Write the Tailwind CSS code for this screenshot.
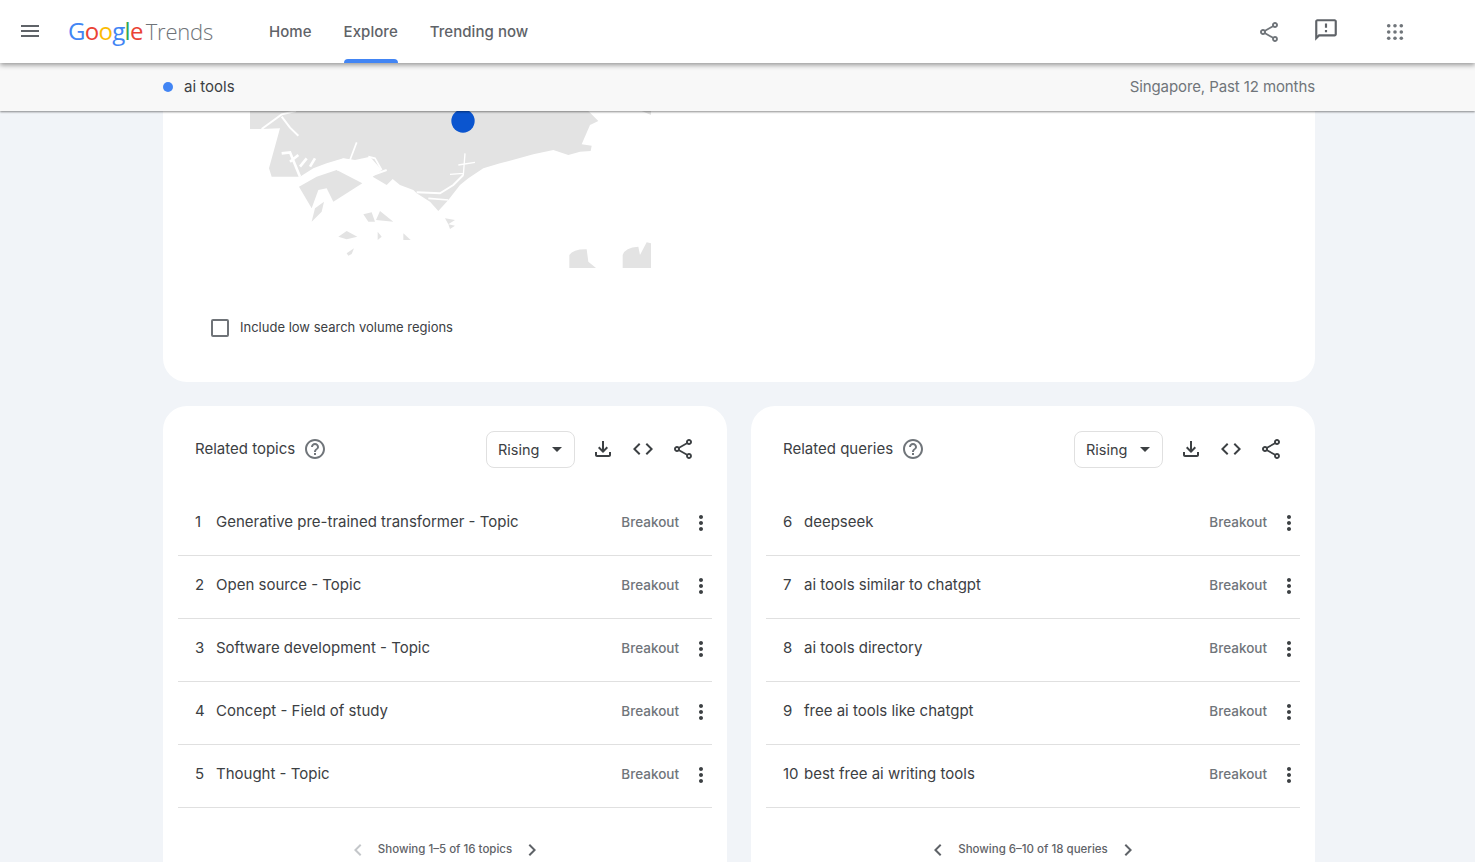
<!DOCTYPE html>
<html lang="en">
<head>
  <meta charset="UTF-8">
  <meta name="viewport" content="width=device-width, initial-scale=1.0">
  <title>Google Trends</title>
  <script src="https://cdn.jsdelivr.net/npm/@tailwindcss/browser@4"></script>
</head>
<body class="bg-[#f1f4f8] [font-family:Inter,sans-serif] h-[862px] overflow-hidden text-[#3c4043]">
  <!-- icon sprites -->
  <svg class="hidden">
    <symbol id="share" viewBox="0 0 24 24"><path d="M18 16.08c-.76 0-1.44.3-1.96.77L8.91 12.7c.05-.23.09-.46.09-.7s-.04-.47-.09-.7l7.05-4.11c.54.5 1.25.81 2.04.81 1.66 0 3-1.34 3-3s-1.34-3-3-3-3 1.34-3 3c0 .24.04.47.09.7L8.04 9.81C7.5 9.31 6.79 9 6 9c-1.66 0-3 1.34-3 3s1.34 3 3 3c.79 0 1.5-.31 2.04-.81l7.12 4.16c-.05.21-.08.43-.08.65 0 1.61 1.31 2.92 2.92 2.92 1.61 0 2.92-1.31 2.92-2.92s-1.31-2.92-2.92-2.92zM18 4c.55 0 1 .45 1 1s-.45 1-1 1-1-.45-1-1 .45-1 1-1zM6 13c-.55 0-1-.45-1-1s.45-1 1-1 1 .45 1 1-.45 1-1 1zm12 7.02c-.55 0-1-.45-1-1s.45-1 1-1 1 .45 1 1-.45 1-1 1z"/></symbol>
    <symbol id="download" viewBox="0 0 24 24"><path d="M18 15v3H6v-3H4v3c0 1.1.9 2 2 2h12c1.1 0 2-.9 2-2v-3h-2zm-1-4l-1.41-1.41L13 12.17V4h-2v8.17L8.41 9.59 7 11l5 5 5-5z"/></symbol>
    <symbol id="code" viewBox="0 0 24 24"><path d="M9.4 16.6L4.8 12l4.6-4.6L8 6l-6 6 6 6 1.4-1.4zm5.2 0l4.6-4.6-4.6-4.6L16 6l6 6-6 6-1.4-1.4z"/></symbol>
    <symbol id="help" viewBox="0 0 24 24"><path d="M11 18h2v-2h-2v2zm1-16C6.48 2 2 6.48 2 12s4.48 10 10 10 10-4.48 10-10S17.52 2 12 2zm0 18c-4.41 0-8-3.59-8-8s3.59-8 8-8 8 3.59 8 8-3.59 8-8 8zm0-14c-2.21 0-4 1.79-4 4h2c0-1.1.9-2 2-2s2 .9 2 2c0 2-3 1.75-3 5h2c0-2.25 3-2.5 3-5 0-2.21-1.79-4-4-4z"/></symbol>
    <symbol id="more" viewBox="0 0 24 24"><path d="M12 8c1.1 0 2-.9 2-2s-.9-2-2-2-2 .9-2 2 .9 2 2 2zm0 2c-1.1 0-2 .9-2 2s.9 2 2 2 2-.9 2-2-.9-2-2-2zm0 6c-1.1 0-2 .9-2 2s.9 2 2 2 2-.9 2-2-.9-2-2-2z"/></symbol>
    <symbol id="prev" viewBox="0 0 24 24"><path d="M15.41 7.41L14 6l-6 6 6 6 1.41-1.41L10.83 12z"/></symbol>
    <symbol id="next" viewBox="0 0 24 24"><path d="M10 6L8.59 7.41 13.17 12l-4.58 4.59L10 18l6-6z"/></symbol>
  </svg>

  <header class="relative z-20 h-[63px] bg-white flex items-center shadow-[0_2px_5px_rgba(0,0,0,0.4)]">
    <svg class="w-6 h-6 ml-[18px] fill-[#5f6368] -mt-[1px]" viewBox="0 0 24 24"><path d="M3 18h18v-2H3v2zm0-5h18v-2H3v2zm0-7v2h18V6H3z"/></svg>
    <div class="ml-[26px] w-[174px] flex items-baseline -mt-[1px] leading-none [font-family:'Open_Sans',sans-serif] whitespace-nowrap">
      <span class="text-[24px] tracking-[-0.7px] font-medium"><span class="text-[#4285f4]">G</span><span class="text-[#ea4335]">o</span><span class="text-[#fbbc05]">o</span><span class="text-[#4285f4]">g</span><span class="text-[#34a853]">l</span><span class="text-[#ea4335]">e</span></span>
      <span class="ml-[3px] text-[22px] tracking-[-0.2px] text-[#6f7378] font-light">Trends</span>
    </div>
    <nav class="flex h-full gap-8 ml-[27px] text-[15px] tracking-[0.05px] font-medium text-[#5f6368]">
      <a class="h-full pt-[2px] flex items-center">Home</a>
      <a class="relative h-full pt-[2px] flex items-center">Explore<span class="absolute bottom-0 left-0 right-0 h-1 rounded-t bg-[#4285f4]"></span></a>
      <a class="h-full pt-[2px] flex items-center">Trending now</a>
    </nav>
    <div class="ml-auto flex items-center mr-[68px]">
      <svg class="w-6 h-6 fill-[#70757a]"><use href="#share"/></svg>
      <svg class="w-[26px] h-[26px] ml-[32px] -mt-[4px] fill-[#5f6368]" viewBox="0 0 24 24"><path d="M20 2H4c-1.1 0-1.99.9-1.99 2L2 22l4-4h14c1.1 0 2-.9 2-2V4c0-1.1-.9-2-2-2zm0 14H5.17l-.59.59-.58.58V4h16v12zm-9-4h2v2h-2zm0-6h2v4h-2z"/></svg>
      <svg class="w-6 h-6 ml-[44px] fill-[#70757a]" viewBox="0 0 24 24"><circle cx="5.7" cy="5.7" r="1.8"/><circle cx="12" cy="5.7" r="1.8"/><circle cx="18.3" cy="5.7" r="1.8"/><circle cx="5.7" cy="12" r="1.8"/><circle cx="12" cy="12" r="1.8"/><circle cx="18.3" cy="12" r="1.8"/><circle cx="5.7" cy="18.3" r="1.8"/><circle cx="12" cy="18.3" r="1.8"/><circle cx="18.3" cy="18.3" r="1.8"/></svg>
    </div>
  </header>

  <div class="relative z-10 h-[48px] bg-[#f8f8f8] flex items-center justify-between pr-[160px] pl-[163px] shadow-[0_1px_2px_rgba(0,0,0,0.45)]">
    <div class="flex items-center">
      <span class="w-[10px] h-[10px] rounded-full bg-[#4285f4]"></span>
      <span class="ml-[11px] text-[15px]">ai tools</span>
    </div>
    <span class="text-[15px] tracking-[-0.1px] text-[#70757a]">Singapore, Past 12 months</span>
  </div>

  <main class="w-[1152px] ml-[163px]">
    <section class="bg-white rounded-b-[24px] h-[271px] pl-[37px]">
      <svg class="block w-[470px] h-[163px] fill-[#e3e3e3]" viewBox="0 18 1410 489">
        <path d="M150 18H1165L1195 48 1170 60 1145 118 1175 122 1172 138 1140 140 1105 150 1060 135 1000 148 900 175 850 190 805 220 780 240 745 285 715 318 690 290 650 265 640 255 600 240 578 222 560 240 518 215 545 195 510 155 465 165 430 160 380 175 340 190 300 215 215 215 207 190 240 70 185 72H150z"/>
        <path d="M297 245 350 215 410 195 487 235 400 290 380 250 355 255 335 310 297 245z"/>
        <path d="M335 350 345 310 372 290 365 320z"/>
        <path d="M415 395 440 378 472 395 440 403z"/>
        <path d="M490 328 515 322 525 350 505 350z M528 345 540 318 580 350z"/>
        <path d="M533 405V380L545 395z M610 385 632 405H610z"/>
        <path d="M440 445 462 430 455 447 445 452z"/>
        <path d="M735 340 765 345 745 358z M745 358 765 362 750 372z"/>
        <path d="M1108 489V450Q1120 432 1160 433L1165 470 1188 489z"/>
        <path d="M1268 489V450Q1275 427 1315 425L1320 450 1340 412 1353 415V489z"/>
        <path d="M1325 18H1353V30z"/>
        <g fill="none" stroke="#fff">
          <path stroke-width="6" d="M185 72 245 28 288 18"/>
          <path stroke-width="6" d="M245 35 270 68 295 92"/>
          <path stroke-width="8" d="M245 145 270 142 300 215 M270 170 295 150 M300 185 320 160 M330 185 345 160"/>
          <path stroke-width="10" d="M300 222 415 170"/>
          <path stroke-width="8" d="M410 195 430 165 480 172"/>
          <path stroke-width="5" d="M450 165 470 112"/>
          <path stroke-width="5" d="M505 155 525 160 545 195"/>
          <path stroke-width="6" d="M518 210 560 195"/>
          <path stroke-width="6" d="M650 262 720 265 760 240 790 210"/>
          <path stroke-width="4" d="M790 210 795 145 M775 180 825 172 M750 208 790 205"/>
          <path stroke-width="5" d="M685 280 745 285"/>
        </g>
        <circle cx="789" cy="48" r="35" fill="#0b55cf"/>
      </svg>
      <div class="flex items-center ml-[12px] mt-[44px]">
        <span class="w-[18px] h-[18px] -ml-[1px] border-2 border-[#6f7378] rounded-[2px]"></span>
        <span class="ml-[11px] text-[13px]">Include low search volume regions</span>
      </div>
    </section>

    <div class="grid grid-cols-2 gap-6 mt-[24px]">
      <!-- related topics -->
      <section class="bg-white rounded-[24px] h-[480px] px-[15px]">
        <div class="h-[87px] flex items-center pl-[17px] pr-[17px]">
          <span class="text-[15px]">Related topics</span>
          <svg class="w-6 h-6 ml-[8px] -mt-[1px] fill-[#70757a]"><use href="#help"/></svg>
          <div class="ml-auto w-[89px] h-[37px] border border-[#e0e0e0] rounded-lg flex items-center pl-[11px] text-[14.5px]">Rising<span class="ml-[13px] border-x-[5px] border-x-transparent border-t-[5px] border-t-[#3c4043]"></span></div>
          <svg class="w-6 h-6 ml-[16px] -mt-[1px] fill-[#3c4043]"><use href="#download"/></svg>
          <svg class="w-6 h-6 ml-[16px] -mt-[1px] fill-[#3c4043]"><use href="#code"/></svg>
          <svg class="w-6 h-6 ml-[16px] -mt-[1px] fill-[#3c4043]"><use href="#share"/></svg>
        </div>
        <div class="h-[63px] border-b border-[#e0e0e0] flex items-center pb-[3px] pl-[17px] text-[15px]"><span class="w-[21px]">1</span><span>Generative pre-trained transformer - Topic</span><span class="ml-auto text-[13.5px] text-[#70757a] font-medium">Breakout</span><svg class="w-6 h-6 ml-[10px] -mr-[1px] fill-[#3c4043]"><use href="#more"/></svg></div>
        <div class="h-[63px] border-b border-[#e0e0e0] flex items-center pb-[3px] pl-[17px] text-[15px]"><span class="w-[21px]">2</span><span>Open source - Topic</span><span class="ml-auto text-[13.5px] text-[#70757a] font-medium">Breakout</span><svg class="w-6 h-6 ml-[10px] -mr-[1px] fill-[#3c4043]"><use href="#more"/></svg></div>
        <div class="h-[63px] border-b border-[#e0e0e0] flex items-center pb-[3px] pl-[17px] text-[15px]"><span class="w-[21px]">3</span><span>Software development - Topic</span><span class="ml-auto text-[13.5px] text-[#70757a] font-medium">Breakout</span><svg class="w-6 h-6 ml-[10px] -mr-[1px] fill-[#3c4043]"><use href="#more"/></svg></div>
        <div class="h-[63px] border-b border-[#e0e0e0] flex items-center pb-[3px] pl-[17px] text-[15px]"><span class="w-[21px]">4</span><span>Concept - Field of study</span><span class="ml-auto text-[13.5px] text-[#70757a] font-medium">Breakout</span><svg class="w-6 h-6 ml-[10px] -mr-[1px] fill-[#3c4043]"><use href="#more"/></svg></div>
        <div class="h-[63px] border-b border-[#e0e0e0] flex items-center pb-[3px] pl-[17px] text-[15px]"><span class="w-[21px]">5</span><span>Thought - Topic</span><span class="ml-auto text-[13.5px] text-[#70757a] font-medium">Breakout</span><svg class="w-6 h-6 ml-[10px] -mr-[1px] fill-[#3c4043]"><use href="#more"/></svg></div>
        <div class="flex items-center justify-center h-[24px] mt-[30px] text-[11.5px] font-medium text-[#5f6368]">
          <svg class="w-6 h-6 fill-[#c4c7ca]"><use href="#prev"/></svg>
          <span class="mx-[8px]">Showing 1–5 of 16 topics</span>
          <svg class="w-6 h-6 fill-[#5f6368]"><use href="#next"/></svg>
        </div>
      </section>

      <!-- related queries -->
      <section class="bg-white rounded-[24px] h-[480px] px-[15px]">
        <div class="h-[87px] flex items-center pl-[17px] pr-[17px]">
          <span class="text-[15px]">Related queries</span>
          <svg class="w-6 h-6 ml-[8px] -mt-[1px] fill-[#70757a]"><use href="#help"/></svg>
          <div class="ml-auto w-[89px] h-[37px] border border-[#e0e0e0] rounded-lg flex items-center pl-[11px] text-[14.5px]">Rising<span class="ml-[13px] border-x-[5px] border-x-transparent border-t-[5px] border-t-[#3c4043]"></span></div>
          <svg class="w-6 h-6 ml-[16px] -mt-[1px] fill-[#3c4043]"><use href="#download"/></svg>
          <svg class="w-6 h-6 ml-[16px] -mt-[1px] fill-[#3c4043]"><use href="#code"/></svg>
          <svg class="w-6 h-6 ml-[16px] -mt-[1px] fill-[#3c4043]"><use href="#share"/></svg>
        </div>
        <div class="h-[63px] border-b border-[#e0e0e0] flex items-center pb-[3px] pl-[17px] text-[15px]"><span class="w-[21px]">6</span><span>deepseek</span><span class="ml-auto text-[13.5px] text-[#70757a] font-medium">Breakout</span><svg class="w-6 h-6 ml-[10px] -mr-[1px] fill-[#3c4043]"><use href="#more"/></svg></div>
        <div class="h-[63px] border-b border-[#e0e0e0] flex items-center pb-[3px] pl-[17px] text-[15px]"><span class="w-[21px]">7</span><span>ai tools similar to chatgpt</span><span class="ml-auto text-[13.5px] text-[#70757a] font-medium">Breakout</span><svg class="w-6 h-6 ml-[10px] -mr-[1px] fill-[#3c4043]"><use href="#more"/></svg></div>
        <div class="h-[63px] border-b border-[#e0e0e0] flex items-center pb-[3px] pl-[17px] text-[15px]"><span class="w-[21px]">8</span><span>ai tools directory</span><span class="ml-auto text-[13.5px] text-[#70757a] font-medium">Breakout</span><svg class="w-6 h-6 ml-[10px] -mr-[1px] fill-[#3c4043]"><use href="#more"/></svg></div>
        <div class="h-[63px] border-b border-[#e0e0e0] flex items-center pb-[3px] pl-[17px] text-[15px]"><span class="w-[21px]">9</span><span>free ai tools like chatgpt</span><span class="ml-auto text-[13.5px] text-[#70757a] font-medium">Breakout</span><svg class="w-6 h-6 ml-[10px] -mr-[1px] fill-[#3c4043]"><use href="#more"/></svg></div>
        <div class="h-[63px] border-b border-[#e0e0e0] flex items-center pb-[3px] pl-[17px] text-[15px]"><span class="w-[21px]">10</span><span>best free ai writing tools</span><span class="ml-auto text-[13.5px] text-[#70757a] font-medium">Breakout</span><svg class="w-6 h-6 ml-[10px] -mr-[1px] fill-[#3c4043]"><use href="#more"/></svg></div>
        <div class="flex items-center justify-center h-[24px] mt-[30px] text-[11.5px] font-medium text-[#5f6368]">
          <svg class="w-6 h-6 fill-[#5f6368]"><use href="#prev"/></svg>
          <span class="mx-[8px]">Showing 6–10 of 18 queries</span>
          <svg class="w-6 h-6 fill-[#5f6368]"><use href="#next"/></svg>
        </div>
      </section>
    </div>
  </main>
</body>
</html>
